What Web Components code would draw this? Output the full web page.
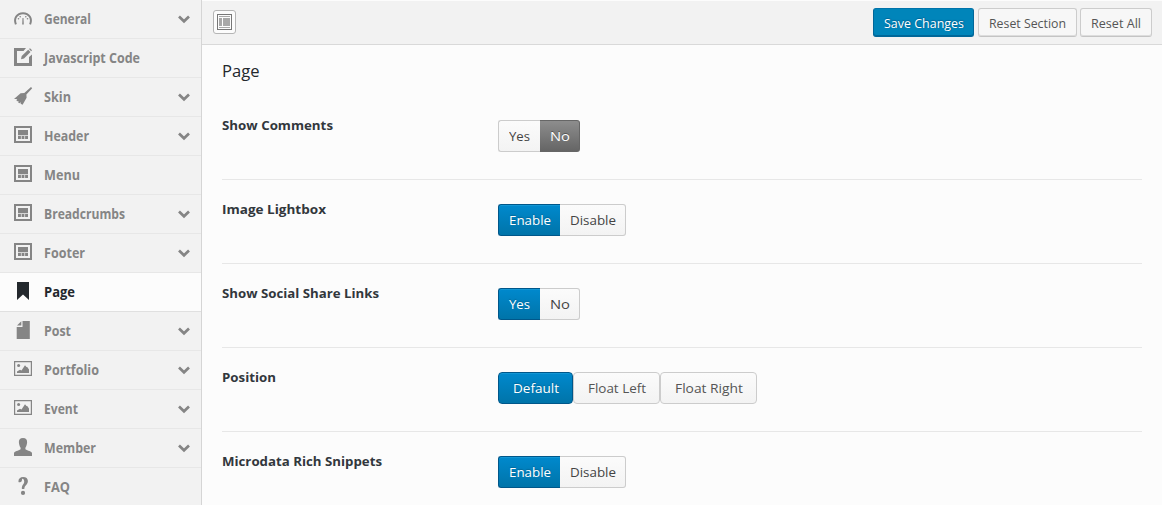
<!DOCTYPE html>
<html lang="en">
<head>
<meta charset="utf-8">
<title>Theme Options</title>
<style>
body{margin:0;background:#fcfcfc;font-family:"Open Sans","Noto Sans",sans-serif;font-size:13px;color:#23282d}
</style>
</head>
<body>
<options-panel></options-panel>
<script>
const define = (name, html, init) => {
  const t = document.createElement('template');
  t.innerHTML = html;
  customElements.define(name, class extends HTMLElement {
    connectedCallback() {
      if (this.shadowRoot) return;
      this.attachShadow({mode: 'open'}).append(t.content.cloneNode(true));
      if (init) init(this, this.shadowRoot);
    }
  });
};

/* Label condensed or stretched horizontally so that it takes the given width. */
define('fit-text', `<style>:host{display:inline-block;white-space:pre}span{display:inline-block;transform-origin:0 50%}</style><span><slot></slot></span>`, (el, root) => {
  const w = +el.getAttribute('w'), s = root.querySelector('span');
  el.style.width = w + 'px';
  el.fit = () => {
    s.style.transform = 'none';
    s.style.transform = 'scaleX(' + w / s.getBoundingClientRect().width + ')';
  };
});

const frame = '<path fill-rule="evenodd" d="M0 0H18V17H0ZM2 2V15H16V2Z"/><path d="M4 4H14V9.300H4ZM4 10H6.900V13H4ZM7.600 10H10.400V13H7.600ZM11.100 10H14V13H11.100Z"/>';
const image = '<path fill-rule="evenodd" d="M0 1H18V16H0ZM1.200 2.200V14.800H16.800V2.200Z"/><circle cx="4.600" cy="5.400" r="1.500"/><path d="M3 13V11.500L6 9.800L7.500 10.500L11 5.200L12.500 7L13.200 7L15 9.500V13Z"/>';
const icons = {
  gauge: '<path d="M1.900 15.300C-.6 9.500 3 4.200 9 4.200S18.600 9.500 16.100 15.300" fill="none" stroke="currentColor" stroke-width="2"/><circle cx="4.500" cy="9.800" r=".8"/><circle cx="6.200" cy="7.700" r=".8"/><circle cx="11.800" cy="7.700" r=".8"/><circle cx="13.500" cy="9.800" r=".8"/><path d="M8.500 9H9.500L9.800 15.500H8.200Z"/>',
  edit: '<path d="M0 0H12L9.500 3H3V15H15V9L18 6.500V18H0Z"/><path d="M7 11.200L7.700 8L14.200 1.800L16.500 4L10 10.400Z"/><path d="M15 1L16 0.200L18 2.200L17.200 3.200Z"/>',
  broom: '<path d="M17 0L18.200 1.200L12.400 7.600L12.600 10.700L8.600 17.700L6.600 16.700L6.900 15.300L5.300 16.200L4.100 15.200L4.600 13.900L3 14.300L2.400 13L3.300 11.900L0 12L6.600 6.200L10.300 6Z"/>',
  frame, image,
  bookmark: '<path d="M3 0H15V18L9 12.500L3 18Z"/>',
  file: '<path d="M8.500 0H15.800V18H2.700V6H8.500Z"/><path d="M7.300 .3V4.400H3Z"/>',
  user: '<path d="M9 0C12 0 13.400 1.900 13.100 4.600C12.900 6.800 12.300 8.600 11.400 9.800V11.300C13.500 13 18 13 18 15.300V18H0V15.300C0 13 4.500 13 6.600 11.300V9.800C5.700 8.600 5.100 6.800 4.900 4.600C4.600 1.900 6 0 9 0Z"/>',
  help: '<path d="M4.400 4.500C4.400 1.500 6.400 0 9.100 0C12.200 0 13.900 1.600 13.900 4.100C13.900 8 10.500 8.200 10.300 12H7.900C7.400 8.200 10.400 7.200 10.200 4.300C10.100 2.600 9.200 1.500 8.300 1.800C7.800 2 8.300 3.200 7.500 4.500C6.800 5.500 4.400 5.700 4.400 4.500Z"/><circle cx="9" cy="15.900" r="2.100"/>'
};

define('nav-item', `<style>
:host{display:flex;box-sizing:border-box;height:39px;border-bottom:1px solid #e7e7e7;color:#858585;font-weight:700;font-size:13.500px;padding:0 11px 0 14px;background:#f2f2f2}
:host([active]){background:#fcfcfc;color:#23282d;border-color:#e0e0e0}
svg{flex:none;fill:currentColor}
.icon{margin-top:9px;overflow:visible}
.label{flex:1;margin-left:12px;line-height:39px;height:38px}
.chev{margin-top:15px}
:host(:not([more])) .chev{display:none}
</style><svg class="icon" width="18" height="18" viewBox="0 0 18 18"></svg><div class="label"><slot></slot></div>
<svg class="chev" width="12" height="9" viewBox="0 0 12 9"><path d="M1 1.600L6 6.300L11 1.600" fill="none" stroke="currentColor" stroke-width="2.700"/></svg>`,
(el, root) => { root.querySelector('.icon').innerHTML = icons[el.getAttribute('icon')]; });

define('side-nav', `<style>
:host{display:block;width:201px;flex:none;border-right:1px solid #d5d5d5;background:#f2f2f2;overflow:hidden}
</style>
<nav-item icon="gauge" more><fit-text w="47">General</fit-text></nav-item>
<nav-item icon="edit"><fit-text w="96">Javascript Code</fit-text></nav-item>
<nav-item icon="broom" more><fit-text w="27">Skin</fit-text></nav-item>
<nav-item icon="frame" more><fit-text w="45">Header</fit-text></nav-item>
<nav-item icon="frame"><fit-text w="36">Menu</fit-text></nav-item>
<nav-item icon="frame" more><fit-text w="81">Breadcrumbs</fit-text></nav-item>
<nav-item icon="frame" more><fit-text w="41">Footer</fit-text></nav-item>
<nav-item icon="bookmark" active><fit-text w="31">Page</fit-text></nav-item>
<nav-item icon="file" more><fit-text w="27">Post</fit-text></nav-item>
<nav-item icon="image" more><fit-text w="55">Portfolio</fit-text></nav-item>
<nav-item icon="image" more><fit-text w="34">Event</fit-text></nav-item>
<nav-item icon="user" more><fit-text w="52">Member</fit-text></nav-item>
<nav-item icon="help"><fit-text w="26">FAQ</fit-text></nav-item>`);

define('push-button', `<style>
:host{display:flex;box-sizing:border-box;align-items:center;justify-content:center;height:29px;border:1px solid #ccc;border-bottom-color:#c4c4c4;border-radius:3px;background:#f7f7f7;color:#555;box-shadow:inset 0 -1px 0 #ddd}
:host([primary]){background:#0085ba;border-color:#0073aa #006799 #006799;color:#fff;text-shadow:0 -1px 1px #006799,1px 0 1px #006799;box-shadow:inset 0 -1px 0 #006799}
</style><slot></slot>`, el => { el.style.width = el.getAttribute('width') + 'px'; });

define('tool-bar', `<style>
:host{display:flex;box-sizing:border-box;height:44px;margin-top:1px;background:#f2f2f2;border-bottom:1px solid #d9d9d9;padding:7px 10px 0 11px;font-size:13.300px}
.expand{box-sizing:border-box;width:23px;height:24px;margin-top:2px;border:1px solid #b5b5b5;border-radius:3px;background:#fcfcfc;display:flex;align-items:center;justify-content:center}
.gap{flex:1}.group{display:flex;gap:4px}.last{margin-left:-1px}
</style>
<div class="expand"><svg width="15" height="16" viewBox="0 0 15 16"><rect x=".5" y=".5" width="14" height="15" fill="#fcfcfc" stroke="#777"/><path d="M2 2H13V3H2ZM2 4H5V12H2ZM6 4H13V12H6ZM2 13H13V14H2Z" fill="#a8a8a8"/></svg></div>
<div class="gap"></div>
<div class="group"><push-button primary width="101"><fit-text w="80">Save Changes</fit-text></push-button>
<push-button width="99"><fit-text w="77">Reset Section</fit-text></push-button>
<push-button class="last" width="72"><fit-text w="50">Reset All</fit-text></push-button></div>`);

define('switch-button', `<style>
:host{display:flex;box-sizing:border-box;align-items:center;justify-content:center;height:32px;border:1px solid #ccc;background:linear-gradient(#fbfbfb,#f3f3f3);color:#444;font-size:13.500px}
:host([first]){border-radius:3px 0 0 3px;border-right:0}
:host([last]){border-radius:0 3px 3px 0;border-left:0}
:host([solo]){border-radius:4px;color:#555}
:host([on]){background:linear-gradient(#0089cd,#0074a9);border-color:#00578a;color:#fff;text-shadow:0 -1px 1px #006799;box-shadow:inset 0 1px 0 #1296d4}
:host([off]){background:linear-gradient(#8d8d8d,#656565);border-color:#666;color:#fff;text-shadow:0 -1px 0 #555}
</style><slot></slot>`, el => { el.style.width = el.getAttribute('width') + 'px'; });

define('option-row', `<style>
:host{display:flex;box-sizing:border-box;height:84px;border-bottom:1px solid #e7e7e7;padding-top:24px}
.title{width:276px;font-weight:700;line-height:18px;margin-top:-4px;color:#32373c;flex:none}
.field{display:flex;height:32px}
</style><div class="title"><slot name="title"></slot></div><div class="field"><slot></slot></div>`);

define('options-panel', `<style>
:host{display:flex;height:505px;overflow:hidden}
main{flex:1;min-width:0}
.body{padding:0 20px}
h2{margin:0;height:51px;font-size:16.500px;font-weight:400;line-height:51px;color:#23282d}
</style>
<side-nav></side-nav>
<main><tool-bar></tool-bar><div class="body"><h2><fit-text w="37.500">Page</fit-text></h2>
<option-row><fit-text slot="title" w="111">Show Comments</fit-text><switch-button first width="42"><fit-text w="21">Yes</fit-text></switch-button><switch-button last off width="40"><fit-text w="20">No</fit-text></switch-button></option-row>
<option-row><fit-text slot="title" w="104">Image Lightbox</fit-text><switch-button first on width="62"><fit-text w="42">Enable</fit-text></switch-button><switch-button last width="66"><fit-text w="46">Disable</fit-text></switch-button></option-row>
<option-row><fit-text slot="title" w="157">Show Social Share Links</fit-text><switch-button first on width="42"><fit-text w="21">Yes</fit-text></switch-button><switch-button last width="40"><fit-text w="20">No</fit-text></switch-button></option-row>
<option-row><fit-text slot="title" w="54">Position</fit-text><switch-button solo on width="75"><fit-text w="46">Default</fit-text></switch-button><switch-button solo width="87"><fit-text w="58">Float Left</fit-text></switch-button><switch-button solo width="97"><fit-text w="68">Float Right</fit-text></switch-button></option-row>
<option-row><fit-text slot="title" w="160">Microdata Rich Snippets</fit-text><switch-button first on width="62"><fit-text w="42">Enable</fit-text></switch-button><switch-button last width="66"><fit-text w="46">Disable</fit-text></switch-button></option-row>
</div></main>`);

/* Every shadow tree is attached by now, so labels can be measured with their final fonts. */
const fitAll = root => root.querySelectorAll('*').forEach(el => {
  if (el.fit) el.fit();
  if (el.shadowRoot) fitAll(el.shadowRoot);
});
fitAll(document.body);
</script>
</body>
</html>
